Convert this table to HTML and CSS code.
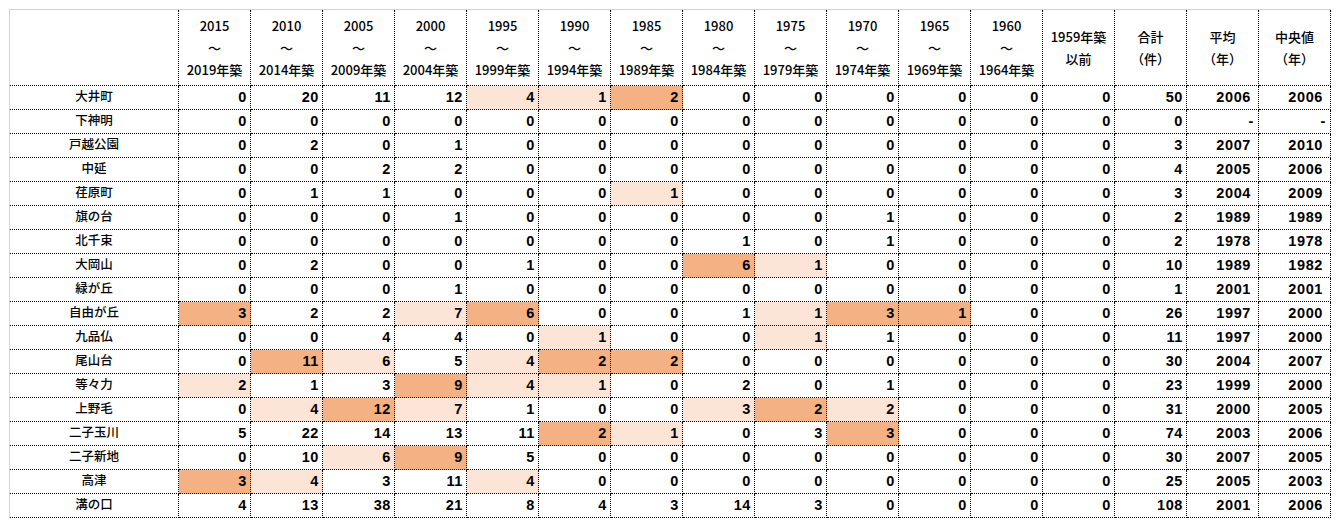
FILE: index.html
```html
<!DOCTYPE html>
<html lang="ja">
<head>
<meta charset="utf-8">
<title>築年別件数</title>
<link rel="stylesheet" href="styles.css">
</head>
<body>
<table class="sheet">
<colgroup>
<col class="c-name">
<col class="c-num"><col class="c-num"><col class="c-num"><col class="c-num"><col class="c-num"><col class="c-num"><col class="c-num"><col class="c-num"><col class="c-num"><col class="c-num"><col class="c-num"><col class="c-num"><col class="c-num"><col class="c-num"><col class="c-num"><col class="c-num">
</colgroup>
<thead>
<tr>
<th></th>
<th>2015<br>～<br>2019年築</th>
<th>2010<br>～<br>2014年築</th>
<th>2005<br>～<br>2009年築</th>
<th>2000<br>～<br>2004年築</th>
<th>1995<br>～<br>1999年築</th>
<th>1990<br>～<br>1994年築</th>
<th>1985<br>～<br>1989年築</th>
<th>1980<br>～<br>1984年築</th>
<th>1975<br>～<br>1979年築</th>
<th>1970<br>～<br>1974年築</th>
<th>1965<br>～<br>1969年築</th>
<th>1960<br>～<br>1964年築</th>
<th>1959年築<br>以前</th>
<th>合計<br>（件）</th>
<th>平均<br>（年）</th>
<th>中央値<br>（年）</th>
</tr>
</thead>
<tbody>
<tr><td class="name">大井町</td><td>0</td><td>20</td><td>11</td><td>12</td><td class="lt">4</td><td class="lt">1</td><td class="dk">2</td><td>0</td><td>0</td><td>0</td><td>0</td><td>0</td><td>0</td><td>50</td><td class="yr">2006</td><td class="yr">2006</td></tr>
<tr><td class="name">下神明</td><td>0</td><td>0</td><td>0</td><td>0</td><td>0</td><td>0</td><td>0</td><td>0</td><td>0</td><td>0</td><td>0</td><td>0</td><td>0</td><td>0</td><td class="dash">-</td><td class="dash">-</td></tr>
<tr><td class="name">戸越公園</td><td>0</td><td>2</td><td>0</td><td>1</td><td>0</td><td>0</td><td>0</td><td>0</td><td>0</td><td>0</td><td>0</td><td>0</td><td>0</td><td>3</td><td class="yr">2007</td><td class="yr">2010</td></tr>
<tr><td class="name">中延</td><td>0</td><td>0</td><td>2</td><td>2</td><td>0</td><td>0</td><td>0</td><td>0</td><td>0</td><td>0</td><td>0</td><td>0</td><td>0</td><td>4</td><td class="yr">2005</td><td class="yr">2006</td></tr>
<tr><td class="name">荏原町</td><td>0</td><td>1</td><td>1</td><td>0</td><td>0</td><td>0</td><td class="lt">1</td><td>0</td><td>0</td><td>0</td><td>0</td><td>0</td><td>0</td><td>3</td><td class="yr">2004</td><td class="yr">2009</td></tr>
<tr><td class="name">旗の台</td><td>0</td><td>0</td><td>0</td><td>1</td><td>0</td><td>0</td><td>0</td><td>0</td><td>0</td><td>1</td><td>0</td><td>0</td><td>0</td><td>2</td><td class="yr">1989</td><td class="yr">1989</td></tr>
<tr><td class="name">北千束</td><td>0</td><td>0</td><td>0</td><td>0</td><td>0</td><td>0</td><td>0</td><td>1</td><td>0</td><td>1</td><td>0</td><td>0</td><td>0</td><td>2</td><td class="yr">1978</td><td class="yr">1978</td></tr>
<tr><td class="name">大岡山</td><td>0</td><td>2</td><td>0</td><td>0</td><td>1</td><td>0</td><td>0</td><td class="dk">6</td><td class="lt">1</td><td>0</td><td>0</td><td>0</td><td>0</td><td>10</td><td class="yr">1989</td><td class="yr">1982</td></tr>
<tr><td class="name">緑が丘</td><td>0</td><td>0</td><td>0</td><td>1</td><td>0</td><td>0</td><td>0</td><td>0</td><td>0</td><td>0</td><td>0</td><td>0</td><td>0</td><td>1</td><td class="yr">2001</td><td class="yr">2001</td></tr>
<tr><td class="name">自由が丘</td><td class="dk">3</td><td>2</td><td>2</td><td class="lt">7</td><td class="dk">6</td><td>0</td><td>0</td><td>1</td><td class="lt">1</td><td class="dk">3</td><td class="dk">1</td><td>0</td><td>0</td><td>26</td><td class="yr">1997</td><td class="yr">2000</td></tr>
<tr><td class="name">九品仏</td><td>0</td><td>0</td><td>4</td><td>4</td><td>0</td><td class="lt">1</td><td>0</td><td>0</td><td class="lt">1</td><td>1</td><td>0</td><td>0</td><td>0</td><td>11</td><td class="yr">1997</td><td class="yr">2000</td></tr>
<tr><td class="name">尾山台</td><td>0</td><td class="dk">11</td><td class="lt">6</td><td>5</td><td class="lt">4</td><td class="dk">2</td><td class="dk">2</td><td>0</td><td>0</td><td>0</td><td>0</td><td>0</td><td>0</td><td>30</td><td class="yr">2004</td><td class="yr">2007</td></tr>
<tr><td class="name">等々力</td><td class="lt">2</td><td>1</td><td>3</td><td class="dk">9</td><td class="lt">4</td><td class="lt">1</td><td>0</td><td>2</td><td>0</td><td>1</td><td>0</td><td>0</td><td>0</td><td>23</td><td class="yr">1999</td><td class="yr">2000</td></tr>
<tr><td class="name">上野毛</td><td>0</td><td class="lt">4</td><td class="dk">12</td><td class="lt">7</td><td>1</td><td>0</td><td>0</td><td class="lt">3</td><td class="dk">2</td><td class="lt">2</td><td>0</td><td>0</td><td>0</td><td>31</td><td class="yr">2000</td><td class="yr">2005</td></tr>
<tr><td class="name">二子玉川</td><td>5</td><td>22</td><td>14</td><td>13</td><td>11</td><td class="dk">2</td><td class="lt">1</td><td>0</td><td>3</td><td class="dk">3</td><td>0</td><td>0</td><td>0</td><td>74</td><td class="yr">2003</td><td class="yr">2006</td></tr>
<tr><td class="name">二子新地</td><td>0</td><td>10</td><td class="lt">6</td><td class="dk">9</td><td>5</td><td>0</td><td>0</td><td>0</td><td>0</td><td>0</td><td>0</td><td>0</td><td>0</td><td>30</td><td class="yr">2007</td><td class="yr">2005</td></tr>
<tr><td class="name">高津</td><td class="dk">3</td><td class="lt">4</td><td>3</td><td>11</td><td class="lt">4</td><td>0</td><td>0</td><td>0</td><td>0</td><td>0</td><td>0</td><td>0</td><td>0</td><td>25</td><td class="yr">2005</td><td class="yr">2003</td></tr>
<tr><td class="name">溝の口</td><td>4</td><td>13</td><td>38</td><td>21</td><td>8</td><td>4</td><td>3</td><td>14</td><td>3</td><td>0</td><td>0</td><td>0</td><td>0</td><td>108</td><td class="yr">2001</td><td class="yr">2006</td></tr>
</tbody>
</table>
</body>
</html>
```
FILE: styles.css
```css
html, body {
  margin: 0;
  padding: 0;
  background: #ffffff;
}

body {
  padding: 9px 0 0 9px;
  font-family: "Liberation Sans", "Noto Sans CJK JP", sans-serif;
  color: #000000;
}

.sheet {
  border-collapse: separate;
  border-spacing: 0;
  table-layout: fixed;
  width: 1322px;
  border-top: 1px solid #d4d4d4;
  border-left: 1px solid #d4d4d4;
}

.c-name {
  width: 169px;
}

.c-num {
  width: 72px;
}

.sheet th,
.sheet td {
  box-sizing: border-box;
  border-right: 1px dotted #000000;
  border-bottom: 1px dotted #000000;
  padding: 0;
  white-space: nowrap;
  overflow: hidden;
}

.sheet th {
  height: 76px;
  font-family: "Noto Sans CJK JP", sans-serif;
  font-size: 13px;
  font-weight: 500;
  line-height: 22px;
  text-align: center;
  vertical-align: middle;
}

.sheet td {
  height: 24px;
  font-size: 14.5px;
  font-weight: bold;
  letter-spacing: 0.6px;
  line-height: 23px;
  text-align: right;
  padding-right: 3px;
  vertical-align: middle;
}

.sheet td.name {
  text-align: center;
  font-size: 12.5px;
  font-weight: 500;
  letter-spacing: 0;
  padding-right: 0;
}

.sheet td.yr {
  padding-right: 7px;
}

.sheet td.dash {
  padding-right: 4px;
}

.sheet td.lt {
  background: #fce4d6;
}

.sheet td.dk {
  background: #f4b183;
}
```
